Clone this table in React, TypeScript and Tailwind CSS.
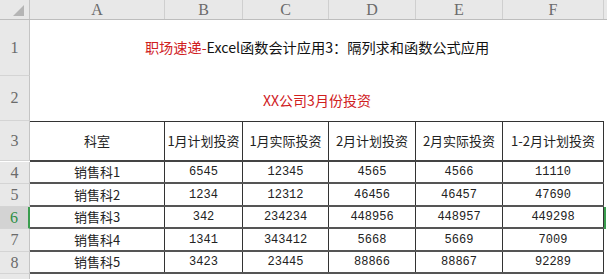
import React from 'react'

const cols = ['A', 'B', 'C', 'D', 'E', 'F']
const widths = ['w-[135px]', 'w-[78px]', 'w-[86px]', 'w-[87px]', 'w-[87px]', 'w-[101px]']

const heads = ['科室', '1月计划投资', '1月实际投资', '2月计划投资', '2月实际投资', '1-2月计划投资']

const rows = [
  { n: 4, h: 'h-[22px]', cells: ['销售科1', '6545', '12345', '4565', '4566', '11110'] },
  { n: 5, h: 'h-[23px]', cells: ['销售科2', '1234', '12312', '46456', '46457', '47690'] },
  { n: 6, h: 'h-[22px]', cells: ['销售科3', '342', '234234', '448956', '448957', '449298'] },
  { n: 7, h: 'h-[23px]', cells: ['销售科4', '1341', '343412', '5668', '5669', '7009'] },
  { n: 8, h: 'h-[22px]', cells: ['销售科5', '3423', '23445', '88866', '88867', '92289'] },
]

const serif = 'font-["Liberation_Serif",serif]'
const cjk = 'font-["Noto_Sans_CJK_SC",sans-serif]'

function RowHead({ n, h, active }: { n?: number; h: string; active?: boolean }) {
  return (
    <div
      className={`${h} w-[30px] shrink-0 flex items-center justify-center border-b border-[#d4d4d4] text-[16px] ${serif} ${
        active ? 'bg-[#d3d3d3] text-[#2f8f45] border-r-2 border-r-[#3a9d4e]' : 'bg-[#e8e8e8] text-[#6b6b6b] border-r border-r-[#c4c4c4]'
      }`}
    >
      {n}
    </div>
  )
}

export default function App() {
  return (
    <div className="w-[607px] h-[279px] overflow-hidden bg-white select-none">
      {/* column header */}
      <div className="flex h-[20px] bg-[#e8e8e8] border-b border-[#bdbdbd]">
        <div className="w-[30px] shrink-0 relative border-r border-[#c4c4c4]">
          <div className="absolute right-[5px] bottom-[3px] w-0 h-0 border-l-[11px] border-l-transparent border-b-[11px] border-b-[#b5b5b5]" />
        </div>
        {cols.map((c, i) => (
          <div
            key={c}
            className={`${widths[i]} shrink-0 flex items-center justify-center border-r border-[#cfcfcf] text-[16px] text-[#6b6b6b] ${serif}`}
          >
            {c}
          </div>
        ))}
        <div className="flex-1" />
      </div>

      {/* row 1 */}
      <div className="flex">
        <RowHead n={1} h="h-[56px]" />
        <div className={`w-[574px] h-[56px] flex items-center justify-center text-[14.2px] text-[#111] ${cjk}`}>
          <span className="text-[#d0201e]">职场速递-</span>Excel函数会计应用3：隔列求和函数公式应用
        </div>
      </div>

      {/* row 2 */}
      <div className="flex">
        <RowHead n={2} h="h-[45px]" />
        <div className={`w-[574px] h-[45px] flex items-center justify-center pt-[4px] text-[14px] text-[#d0201e] ${cjk}`}>
          XX公司3月份投资
        </div>
      </div>

      {/* row 3 header */}
      <div className="flex">
        <RowHead n={3} h="h-[40px]" />
        <div className="flex border-t border-[#333] border-b-2 border-b-[#444]">
          {heads.map((t, i) => (
            <div
              key={t}
              className={`${widths[i]} h-[38px] shrink-0 flex items-center justify-center border-r border-[#333] text-[13px] text-[#222] ${cjk}`}
            >
              {t}
            </div>
          ))}
        </div>
      </div>

      {rows.map((r) => (
        <div key={r.n} className="flex">
          <RowHead n={r.n} h={r.h} active={r.n === 6} />
          <div className={`flex border-b-2 border-[#555] ${r.h}`}>
            {r.cells.map((c, i) => (
              <div
                key={i}
                className={`${widths[i]} shrink-0 flex items-center justify-center border-r border-[#333] text-[#222] ${
                  i === 0 ? `text-[13px] ${cjk}` : 'text-[12px] font-["Liberation_Mono",monospace]'
                }`}
              >
                {c}
              </div>
            ))}
          </div>
          {r.n === 6 && <div className="w-[2px] bg-[#3a9d4e]" />}
        </div>
      ))}

      <div className="flex">
        <RowHead h="h-[10px]" />
      </div>
    </div>
  )
}
